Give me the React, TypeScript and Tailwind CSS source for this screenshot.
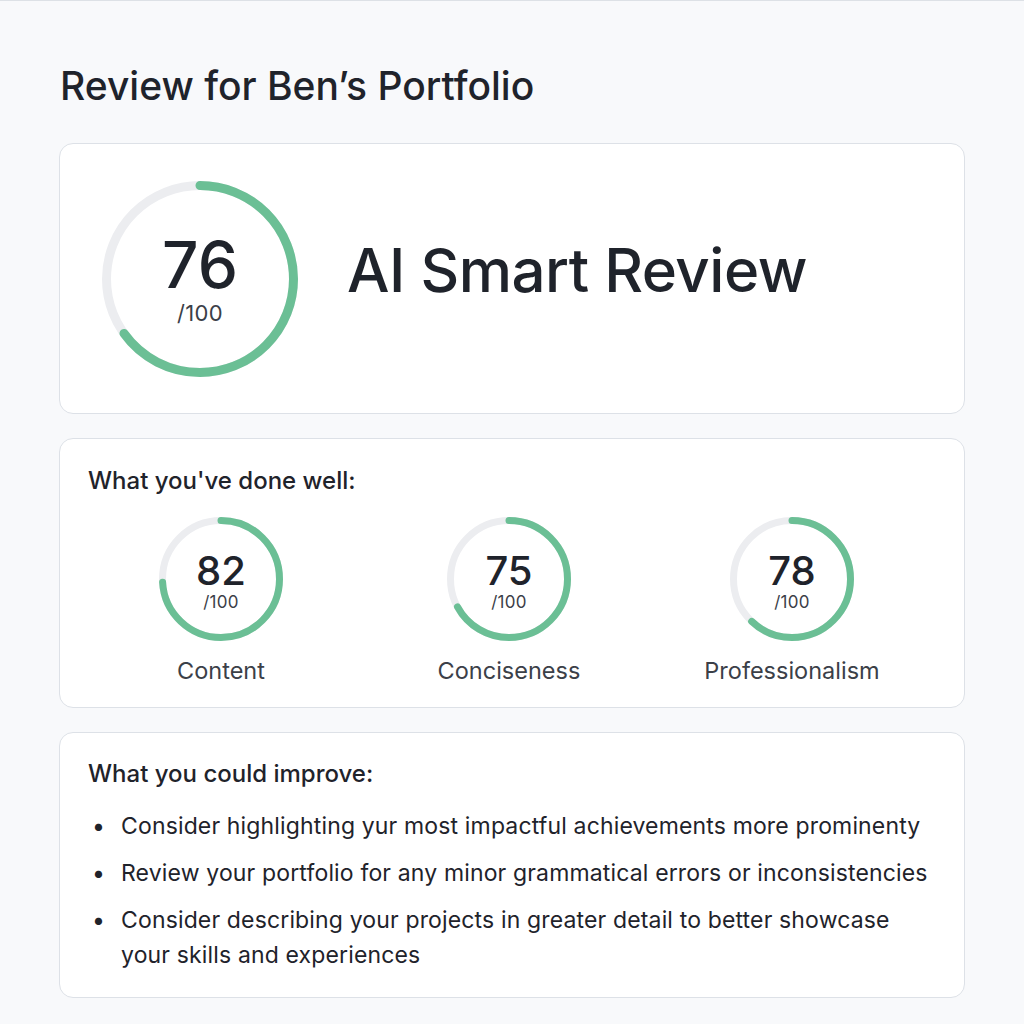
import React from 'react'

type Score = {
  label: string
  value: number
  // how much of the ring is green, read off the picture
  fill: number
}

const scores: Score[] = [
  { label: 'Content', value: 82, fill: 0.74 },
  { label: 'Conciseness', value: 75, fill: 0.67 },
  { label: 'Professionalism', value: 78, fill: 0.62 },
]

const tips = [
  'Consider highlighting yur most impactful achievements more prominenty',
  'Review your portfolio for any minor grammatical errors or inconsistencies',
  'Consider describing your projects in greater detail to better showcase your skills and experiences',
]

const Ring: React.FC<{ size: number; stroke: number; fill: number }> = ({ size, stroke, fill }) => {
  const r = (size - stroke) / 2
  const c = 2 * Math.PI * r
  return (
    <svg width={size} height={size} viewBox={`0 0 ${size} ${size}`} className="-rotate-90">
      <circle cx={size / 2} cy={size / 2} r={r} fill="none" stroke="#ecedf0" strokeWidth={stroke} />
      <circle
        cx={size / 2}
        cy={size / 2}
        r={r}
        fill="none"
        stroke="#6bbf95"
        strokeWidth={stroke}
        strokeLinecap="round"
        strokeDasharray={`${c * fill} ${c}`}
      />
    </svg>
  )
}

export default function App() {
  return (
    <div className="min-h-screen border-t border-[#dde1e6] bg-[#f8f9fb] px-[59px] pt-[63px] font-['Inter',sans-serif] text-[#1f232b]">
      {/* Titel */}
      <h1 className="pl-px text-[39px] font-medium leading-[44px]">Review for Ben’s Portfolio</h1>

      {/* Gesamtwertung */}
      <section className="mt-[35px] flex h-[271px] items-center rounded-[14px] border border-[#dde1e7] bg-white pl-[42px]">
        <div className="relative h-[196px] w-[196px]">
          <Ring size={196} stroke={9} fill={0.65} />
          <div className="absolute inset-0 flex flex-col items-center justify-center pb-[1px]">
            <span className="text-[64px] font-medium leading-none">76</span>
            <span className="mt-[5px] text-[22px] leading-none tracking-[0.3px] text-[#3b4048]">/100</span>
          </div>
        </div>
        <h2 className="mb-[18px] ml-[49px] text-[60px] font-medium leading-none tracking-[-0.5px]">
          AI Smart Review
        </h2>
      </section>

      {/* Stärken */}
      <section className="mt-[24px] rounded-[14px] border border-[#dde1e7] bg-white px-[28px] pb-[22px] pt-[28px]">
        <h3 className="text-[24px] font-medium leading-[28px]">What you've done well:</h3>
        <div className="mt-[22px] grid grid-cols-[266px_310px_256px]">
          {scores.map((s) => (
            <div key={s.label} className="flex flex-col items-center">
              <div className="relative h-[124px] w-[124px]">
                <Ring size={124} stroke={7} fill={s.fill} />
                <div className="absolute inset-0 flex flex-col items-center justify-center pt-[4px]">
                  <span className="text-[40px] font-medium leading-none">{s.value}</span>
                  <span className="mt-[3px] text-[17px] leading-none tracking-[0.3px] text-[#3b4048]">/100</span>
                </div>
              </div>
              <span className="mt-[16px] text-[23.5px] leading-[28px] text-[#3b4048]">{s.label}</span>
            </div>
          ))}
        </div>
      </section>

      {/* Verbesserungen */}
      <section className="mt-[24px] rounded-[14px] border border-[#dde1e7] bg-white pb-[24px] pl-[28px] pr-[30px] pt-[27px]">
        <h3 className="text-[24px] font-medium leading-[28px]">What you could improve:</h3>
        <ul className="mt-[21px] flex flex-col gap-[12px]">
          {tips.map((t) => (
            <li key={t} className="flex text-[23px] leading-[35px] tracking-[0.15px]">
              <span className="w-[33px] shrink-0 pl-[4px]">•</span>
              <span>{t}</span>
            </li>
          ))}
        </ul>
      </section>
    </div>
  )
}
